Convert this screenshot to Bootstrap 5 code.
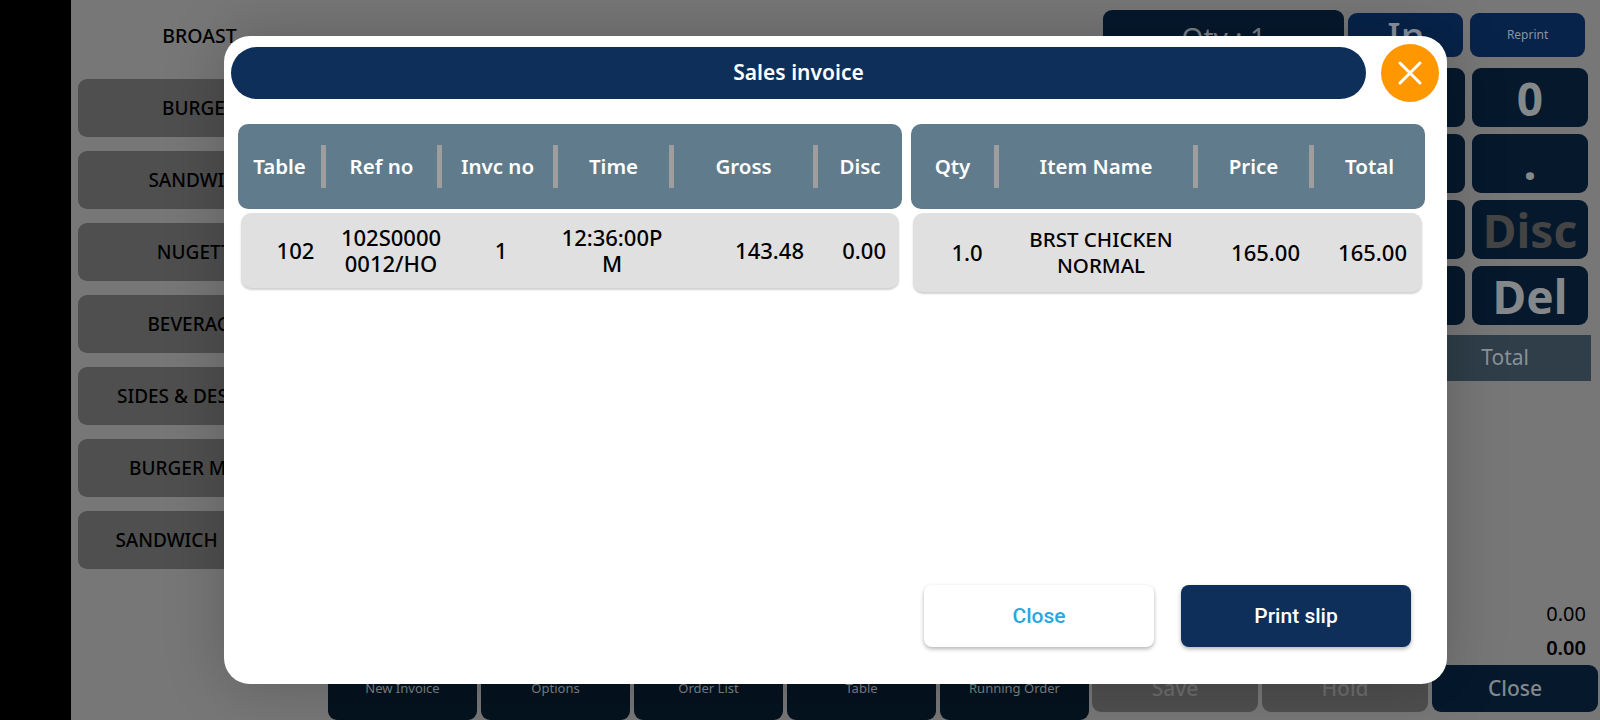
<!DOCTYPE html>
<html lang="en">
<head>
<meta charset="utf-8">
<title>Sales invoice</title>
<link rel="stylesheet" href="https://cdn.jsdelivr.net/npm/bootstrap@5.3.0/dist/css/bootstrap.min.css">
<style>
html,body{height:100%;margin:0;overflow:hidden;background:#000;}
body{font-family:"Noto Sans","Liberation Sans",sans-serif;color:#000;}
.shell{height:720px;position:relative;}
.rail{width:71px;background:#000;flex:none;}
.stage{background:#777;}
.cat-col{width:257px;flex:none;padding-left:7px;}
.cat-first{height:72px;font-size:19.5px;font-weight:500;width:243px;}
.cat-item{height:58px;width:243px;margin-top:14px;background:#4f4f4f;border-radius:9px;font-size:19px;font-weight:500;}
.cat-first + .cat-item{margin-top:7px;}
.mid-col{width:764px;flex:none;}
.tool-row{gap:4px;}
.tool-btn{width:149px;height:60px;background:#05131f;border-radius:0 0 9px 9px;color:#7d8388;font-size:13px;padding-top:19px;text-align:center;}
.side-col{width:508px;flex:none;}
.side-top{padding:10px 15px 0 11px;gap:4px;height:68px;}
.qty-box{width:242px;height:54px;background:#05182c;border-radius:9px;color:#7b8288;font-size:28px;}
.mini-btn{width:115px;height:44px;margin-top:3px;background:#07234a;border-radius:9px;color:#8a93a0;}
.mini-in{font-size:38px;font-weight:500;}
.mini-re{font-size:12px;margin-left:3px;}
.pad-grid{display:grid;grid-template-columns:116px 116px;gap:7px 7px;padding-left:257px;}
.pad-key{height:59px;background:#05182c;border-radius:9px;color:#85888b;font-size:46px;font-weight:700;line-height:1;}
.pad-key.dim{color:#444;}
.total-strip{height:46px;margin:10px 9px 0 11px;background:#2f3e49;color:#8a9197;font-size:21px;padding-right:62px;}
.sum-line{font-size:20px;padding-right:14px;height:34px;line-height:34px;}
.sum-strong{font-weight:600;}
.act-row{gap:4px;padding:0 2px 8px 0;}
.act-btn{width:166px;height:47px;border-radius:9px;background:#4f4f4f;color:#6c6c6c;font-size:21px;font-weight:500;}
.act-btn.dark{background:#05182c;color:#82888d;}
.sheet{position:absolute;left:224px;top:36px;width:1223px;height:648px;background:#fff;border-radius:26px;box-shadow:0 0 60px rgba(0,0,0,.22);}
.sheet-head{padding:8px 8px 0 7px;gap:15px;}
.sheet-title{height:52px;flex:1;background:#0e2f5a;border-radius:26px;color:#fff;font-size:21px;font-weight:600;}
.x-btn{width:58px;height:58px;border-radius:50%;background:#ff9800;border:0;padding:0;flex:none;}
.tables{margin-top:22px;padding-left:14px;gap:9px;}
.tbl-l{width:664px;}
.tbl-r{width:514px;}
.head-band{height:85px;background:#607b8b;border-radius:10px;display:grid;color:#fff;font-size:20.5px;font-weight:600;}
.tbl-l .head-band{grid-template-columns:88px 116px 116px 116px 144px 84px;}
.tbl-r .head-band{grid-template-columns:88px 199px 116px 111px;}
.head-cell{min-width:0;}
.head-sep{width:5px;height:43px;background:#9e9e9e;flex:none;}
.data-band{margin:4px 3px 0;background:#e0e0e0;border-radius:10px;display:grid;font-size:22px;font-weight:500;line-height:26px;box-shadow:0 2px 2px rgba(0,0,0,.18);}
.tbl-l .data-band{height:75px;grid-template-columns:99px 102px 118px 104px 160px 75px;}
.tbl-r .data-band{height:79px;margin-left:2px;grid-template-columns:108px 160px 134px 107px;}
.data-cell{word-break:break-all;min-width:0;padding-bottom:2px;}
.wrap-word{word-break:normal;font-size:20.5px;}
.pe-a{padding-right:20px;}
.pe-b{padding-right:13px;}
.pe-c{padding-right:15px;}
.ps-a{padding-left:10px;}
.sheet-foot{position:absolute;right:36px;bottom:37px;gap:27px;}
.foot-btn{width:230px;height:62px;border-radius:8px;border:0;padding:2px 0 0;font-family:Roboto,sans-serif;font-size:21px;font-weight:500;box-shadow:0 2px 4px rgba(0,0,0,.3);}
.foot-close{background:#fff;color:#29a7df;}
.foot-print{background:#0e2f5a;color:#fff;}
</style>
</head>
<body>
<div class="shell d-flex">
  <div class="rail"></div>
  <div class="stage flex-grow-1 d-flex">
    <div class="cat-col">
      <div class="cat-first d-flex align-items-center justify-content-center">BROAST</div>
      <div class="cat-item d-flex align-items-center justify-content-center">BURGER</div>
      <div class="cat-item d-flex align-items-center justify-content-center">SANDWICH</div>
      <div class="cat-item d-flex align-items-center justify-content-center">NUGETTS</div>
      <div class="cat-item d-flex align-items-center justify-content-center">BEVERAGES</div>
      <div class="cat-item d-flex align-items-center justify-content-center">SIDES &amp; DESSERTS</div>
      <div class="cat-item d-flex align-items-center justify-content-center">BURGER MEALS</div>
      <div class="cat-item d-flex align-items-center justify-content-center">SANDWICH MEALS</div>
    </div>
    <div class="mid-col d-flex flex-column justify-content-end">
      <div class="tool-row d-flex">
        <div class="tool-btn">New Invoice</div>
        <div class="tool-btn">Options</div>
        <div class="tool-btn">Order List</div>
        <div class="tool-btn">Table</div>
        <div class="tool-btn">Running Order</div>
      </div>
    </div>
    <div class="side-col d-flex flex-column">
      <div class="side-top d-flex">
        <div class="qty-box d-flex align-items-center justify-content-center">Qty : 1</div>
        <div class="mini-btn mini-in d-flex align-items-center justify-content-center">In</div>
        <div class="mini-btn mini-re d-flex align-items-center justify-content-center">Reprint</div>
      </div>
      <div class="pad-grid">
        <div class="pad-key"></div>
        <div class="pad-key d-flex align-items-center justify-content-center">0</div>
        <div class="pad-key"></div>
        <div class="pad-key d-flex align-items-end justify-content-center pb-2">.</div>
        <div class="pad-key"></div>
        <div class="pad-key dim d-flex align-items-center justify-content-center">Disc</div>
        <div class="pad-key"></div>
        <div class="pad-key d-flex align-items-center justify-content-center">Del</div>
      </div>
      <div class="total-strip d-flex align-items-center justify-content-end">Total</div>
      <div class="mt-auto text-end">
        <div class="sum-line">0.00</div>
        <div class="sum-line sum-strong">0.00</div>
      </div>
      <div class="act-row d-flex justify-content-end">
        <div class="act-btn d-flex align-items-center justify-content-center">Save</div>
        <div class="act-btn d-flex align-items-center justify-content-center">Hold</div>
        <div class="act-btn dark d-flex align-items-center justify-content-center">Close</div>
      </div>
    </div>
  </div>

  <div class="sheet">
    <div class="sheet-head d-flex align-items-center">
      <div class="sheet-title d-flex align-items-center justify-content-center">Sales invoice</div>
      <button class="x-btn d-flex align-items-center justify-content-center" type="button" aria-label="Close">
        <svg width="26" height="26" viewBox="0 0 26 26" fill="none" stroke="#fff" stroke-width="3" stroke-linecap="round"><path d="M3 3 23 23M23 3 3 23"/></svg>
      </button>
    </div>
    <div class="tables d-flex align-items-start">
      <div class="tbl-l">
        <div class="head-band">
          <div class="head-cell d-flex align-items-center"><span class="flex-grow-1 text-center">Table</span><span class="head-sep"></span></div>
          <div class="head-cell d-flex align-items-center"><span class="flex-grow-1 text-center">Ref no</span><span class="head-sep"></span></div>
          <div class="head-cell d-flex align-items-center"><span class="flex-grow-1 text-center">Invc no</span><span class="head-sep"></span></div>
          <div class="head-cell d-flex align-items-center"><span class="flex-grow-1 text-center">Time</span><span class="head-sep"></span></div>
          <div class="head-cell d-flex align-items-center"><span class="flex-grow-1 text-center">Gross</span><span class="head-sep"></span></div>
          <div class="head-cell d-flex align-items-center"><span class="flex-grow-1 text-center">Disc</span></div>
        </div>
        <div class="data-band">
          <div class="data-cell ps-a d-flex align-items-center justify-content-center">102</div>
          <div class="data-cell d-flex align-items-center justify-content-center text-center">102S00000012/HO</div>
          <div class="data-cell d-flex align-items-center justify-content-center">1</div>
          <div class="data-cell d-flex align-items-center justify-content-center text-center">12:36:00PM</div>
          <div class="data-cell pe-a d-flex align-items-center justify-content-end">143.48</div>
          <div class="data-cell pe-b d-flex align-items-center justify-content-end">0.00</div>
        </div>
      </div>
      <div class="tbl-r">
        <div class="head-band">
          <div class="head-cell d-flex align-items-center"><span class="flex-grow-1 text-center">Qty</span><span class="head-sep"></span></div>
          <div class="head-cell d-flex align-items-center"><span class="flex-grow-1 text-center">Item Name</span><span class="head-sep"></span></div>
          <div class="head-cell d-flex align-items-center"><span class="flex-grow-1 text-center">Price</span><span class="head-sep"></span></div>
          <div class="head-cell d-flex align-items-center"><span class="flex-grow-1 text-center">Total</span></div>
        </div>
        <div class="data-band">
          <div class="data-cell d-flex align-items-center justify-content-center">1.0</div>
          <div class="data-cell wrap-word d-flex align-items-center justify-content-center text-center">BRST CHICKEN NORMAL</div>
          <div class="data-cell pe-c d-flex align-items-center justify-content-end">165.00</div>
          <div class="data-cell pe-c d-flex align-items-center justify-content-end">165.00</div>
        </div>
      </div>
    </div>
    <div class="sheet-foot d-flex">
      <button class="foot-btn foot-close" type="button">Close</button>
      <button class="foot-btn foot-print" type="button">Print slip</button>
    </div>
  </div>
</div>
<script src="https://cdn.jsdelivr.net/npm/bootstrap@5.3.0/dist/js/bootstrap.bundle.min.js"></script>
</body>
</html>
